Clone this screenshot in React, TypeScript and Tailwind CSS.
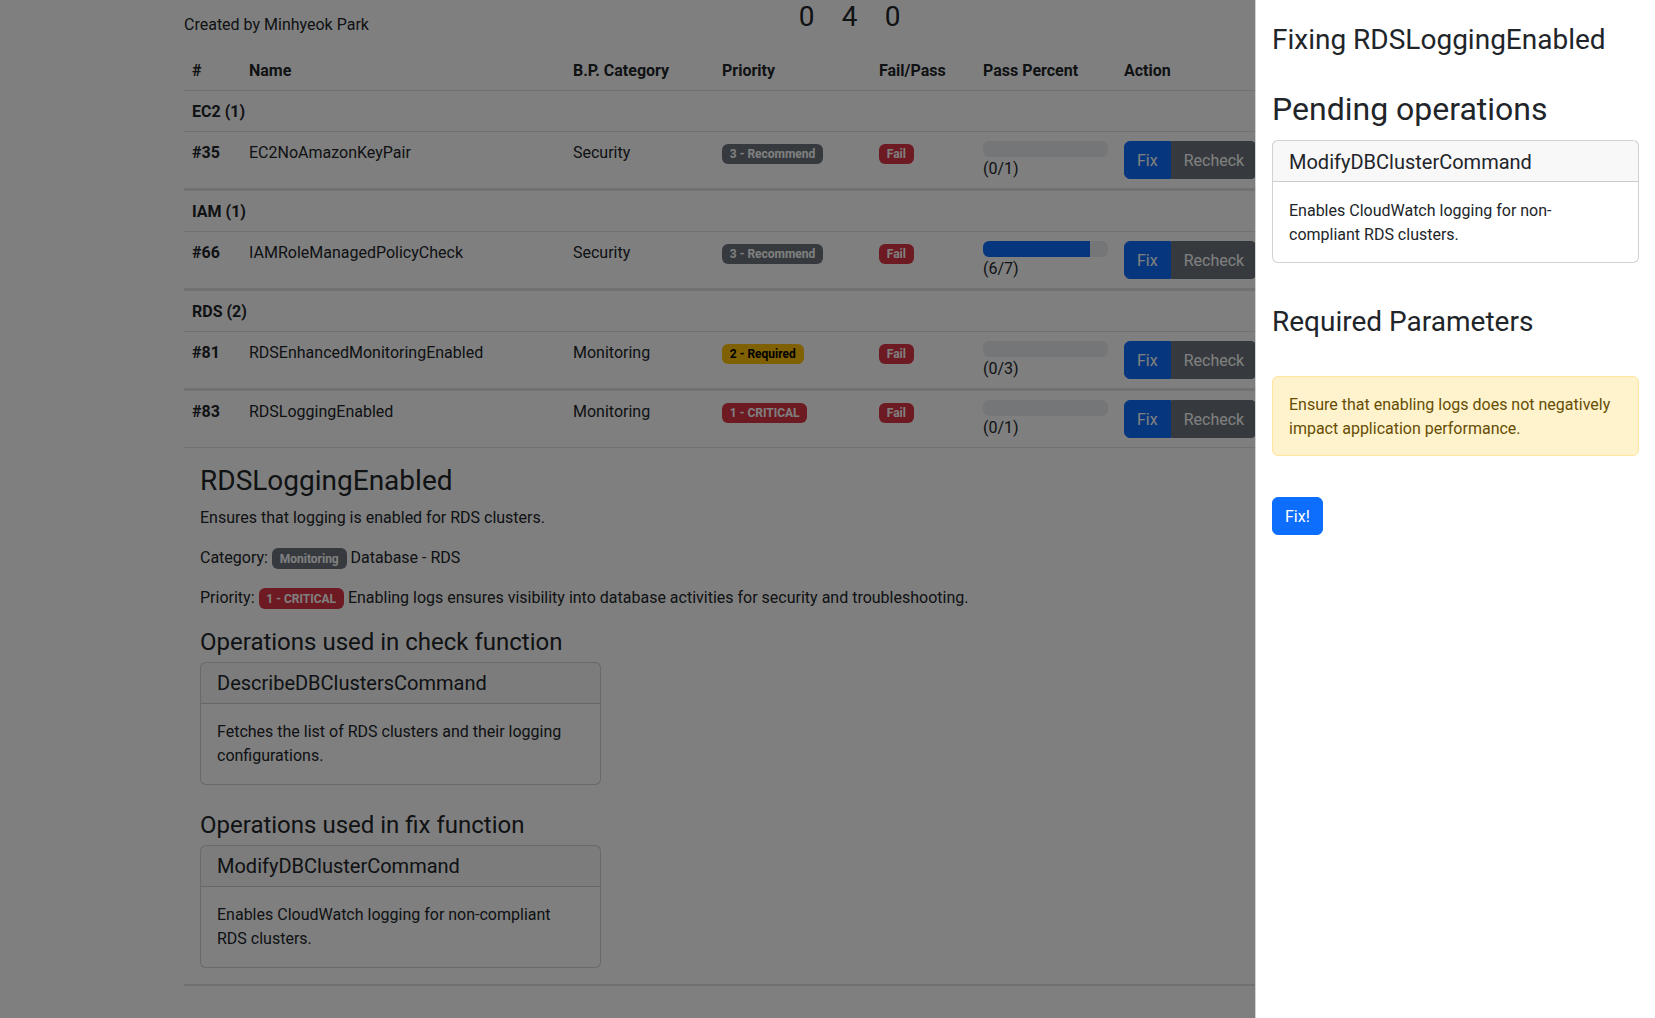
import React from 'react'

type Level = 'recommend' | 'required' | 'critical'

type Check = {
  id: number
  name: string
  category: string
  level: Level
  pass: number
  total: number
  open?: boolean
}

const groups: { name: string; rows: Check[] }[] = [
  {
    name: 'EC2',
    rows: [{ id: 35, name: 'EC2NoAmazonKeyPair', category: 'Security', level: 'recommend', pass: 0, total: 1 }],
  },
  {
    name: 'IAM',
    rows: [{ id: 66, name: 'IAMRoleManagedPolicyCheck', category: 'Security', level: 'recommend', pass: 6, total: 7 }],
  },
  {
    name: 'RDS',
    rows: [
      { id: 81, name: 'RDSEnhancedMonitoringEnabled', category: 'Monitoring', level: 'required', pass: 0, total: 3 },
      { id: 83, name: 'RDSLoggingEnabled', category: 'Monitoring', level: 'critical', pass: 0, total: 1, open: true },
    ],
  },
]

const badge = 'inline-block whitespace-nowrap rounded-[6px] px-[0.65em] py-[0.35em] align-baseline text-[12px] font-bold leading-none'

// text cells sit a pixel lower than the controls, like the original font's baseline
const textCell = 'px-2 pt-[9px] pb-[7px] text-left align-top'

function PriorityBadge({ level }: { level: Level }) {
  if (level === 'critical') return <span className={`${badge} bg-[#dc3545] text-white`}>1 - CRITICAL</span>
  if (level === 'required') return <span className={`${badge} bg-[#ffc107] text-black`}>2 - Required</span>
  return <span className={`${badge} bg-[#6c757d] text-white`}>3 - Recommend</span>
}

function OperationCard({ title, children }: { title: string; children: React.ReactNode }) {
  return (
    <div className="rounded-[6px] border border-black/[0.175] bg-white">
      <div className="border-b border-black/[0.175] bg-[#212529]/[0.03] px-4 py-2">
        <h5 className="text-[20px] leading-[1.2]">{title}</h5>
      </div>
      <div className="p-4">
        <p>{children}</p>
      </div>
    </div>
  )
}

function Detail() {
  return (
    <div className="px-4 pt-4 pb-4">
      <h3 className="mb-2 text-[28px] leading-[1.2]">RDSLoggingEnabled</h3>
      <p className="mb-4">Ensures that logging is enabled for RDS clusters.</p>
      <p className="mb-4">
        Category: <span className={`${badge} bg-[#6c757d] text-white`}>Monitoring</span> Database - RDS
      </p>
      <p className="mb-4">
        Priority: <PriorityBadge level="critical" /> Enabling logs ensures visibility into database activities for
        security and troubleshooting.
      </p>
      <h4 className="pt-[2px] mb-[6px] text-[24px] leading-[1.2]">Operations used in check function</h4>
      <div className="mb-6 w-[401px]">
        <OperationCard title="DescribeDBClustersCommand">
          Fetches the list of RDS clusters and their logging
          <br />
          configurations.
        </OperationCard>
      </div>
      <h4 className="pt-[2px] mb-[5px] text-[24px] leading-[1.2]">Operations used in fix function</h4>
      <div className="w-[401px]">
        <OperationCard title="ModifyDBClusterCommand">
          Enables CloudWatch logging for non-compliant
          <br />
          RDS clusters.
        </OperationCard>
      </div>
    </div>
  )
}

function CheckRow({ row }: { row: Check }) {
  const pct = (row.pass / row.total) * 100
  return (
    <>
      <tr className={row.open ? 'border-b border-[#dee2e6]' : 'border-b-[3px] border-[#dee2e6]'}>
        <th className={`${textCell} font-bold`}>#{row.id}</th>
        <td className={textCell}>{row.name}</td>
        <td className={textCell}>{row.category}</td>
        <td className={textCell}>
          <PriorityBadge level={row.level} />
        </td>
        <td className={textCell}>
          <span className={`${badge} bg-[#dc3545] text-white`}>Fail</span>
        </td>
        <td className="px-2 pt-[9px] pb-[7px] align-top">
          <div className="h-4 overflow-hidden rounded-[6px] bg-[#e9ecef]">
            <div className="h-full bg-[#0d6efd]" style={{ width: `${pct}%` }} />
          </div>
          <div>
            ({row.pass}/{row.total})
          </div>
        </td>
        <td className="px-2 pt-[9px] pb-[7px] align-top">
          <div className="inline-flex">
            <button className="rounded-l-[6px] border border-[#0d6efd] bg-[#0d6efd] px-3 pt-[7px] pb-[5px] text-white">
              Fix
            </button>
            <button className="rounded-r-[6px] border border-[#6c757d] bg-[#6c757d] px-3 pt-[7px] pb-[5px] text-white">
              Recheck
            </button>
          </div>
        </td>
      </tr>
      {row.open && (
        <tr className="border-b-2 border-[#dee2e6]">
          <td colSpan={7} className="p-0">
            <Detail />
          </td>
        </tr>
      )}
    </>
  )
}

export default function App() {
  return (
    <div className="relative h-screen overflow-hidden bg-white font-['Roboto','Liberation_Sans',sans-serif] text-base leading-6 text-[#212529]">
      <main className="pl-[184px]">
        <div className="flex h-[50px] items-start">
          <p className="mt-[13px] w-[601px]">Created by Minhyeok Park</p>
          <div className="flex text-[28px] leading-[1.2]">
            <span className="w-[43px] text-center">0</span>
            <span className="w-[43px] text-center">4</span>
            <span className="w-[43px] text-center">0</span>
          </div>
        </div>

        <table className="w-[1287px] table-fixed border-collapse bg-white">
          <colgroup>
            <col className="w-[57px]" />
            <col className="w-[324px]" />
            <col className="w-[149px]" />
            <col className="w-[157px]" />
            <col className="w-[104px]" />
            <col className="w-[141px]" />
            <col />
          </colgroup>
          <thead>
            <tr className="border-b border-[#dee2e6]">
              <th className={`${textCell} font-bold`}>#</th>
              <th className={`${textCell} font-bold`}>Name</th>
              <th className={`${textCell} font-bold`}>B.P. Category</th>
              <th className={`${textCell} font-bold`}>Priority</th>
              <th className={`${textCell} font-bold`}>Fail/Pass</th>
              <th className={`${textCell} font-bold`}>Pass Percent</th>
              <th className={`${textCell} font-bold`}>Action</th>
            </tr>
          </thead>
          <tbody>
            {groups.map((g) => (
              <React.Fragment key={g.name}>
                <tr className="border-b border-[#dee2e6]">
                  <th colSpan={7} className={`${textCell} font-bold`}>
                    {g.name} ({g.rows.length})
                  </th>
                </tr>
                {g.rows.map((r) => (
                  <CheckRow key={r.id} row={r} />
                ))}
              </React.Fragment>
            ))}
          </tbody>
        </table>
      </main>

      <div className="fixed inset-0 z-10 bg-black/50" />

      <aside className="fixed top-0 right-0 z-20 flex h-full w-[400px] flex-col border-l border-black/[0.175] bg-white">
        <div className="px-4 pt-[23px]">
          <h3 className="text-[28px] leading-[1.2]">Fixing RDSLoggingEnabled</h3>
        </div>
        <div className="px-4">
          <h2 className="mt-[33px] mb-[12px] text-[32px] leading-[1.2]">Pending operations</h2>
          <div className="rounded-[6px] border border-black/[0.175] bg-white">
            <div className="border-b border-black/[0.175] bg-[#212529]/[0.03] px-4 pt-[9px] pb-[7px]">
              <h5 className="text-[20px] leading-[1.2]">ModifyDBClusterCommand</h5>
            </div>
            <div className="px-4 pt-[17px] pb-[15px]">
              <p>
                Enables CloudWatch logging for non-
                <br />
                compliant RDS clusters.
              </p>
            </div>
          </div>
          <h3 className="mt-[42px] text-[28px] leading-[1.2]">Required Parameters</h3>
          <div className="mt-[37px] rounded-[6px] border border-[#ffe69c] bg-[#fff3cd] px-4 pt-[16px] pb-[14px] text-[#664d03]">
            Ensure that enabling logs does not negatively
            <br />
            impact application performance.
          </div>
          <button className="mt-[41px] rounded-[6px] border border-[#0d6efd] bg-[#0d6efd] px-3 pt-[7px] pb-[5px] text-white">
            Fix!
          </button>
        </div>
      </aside>
    </div>
  )
}
